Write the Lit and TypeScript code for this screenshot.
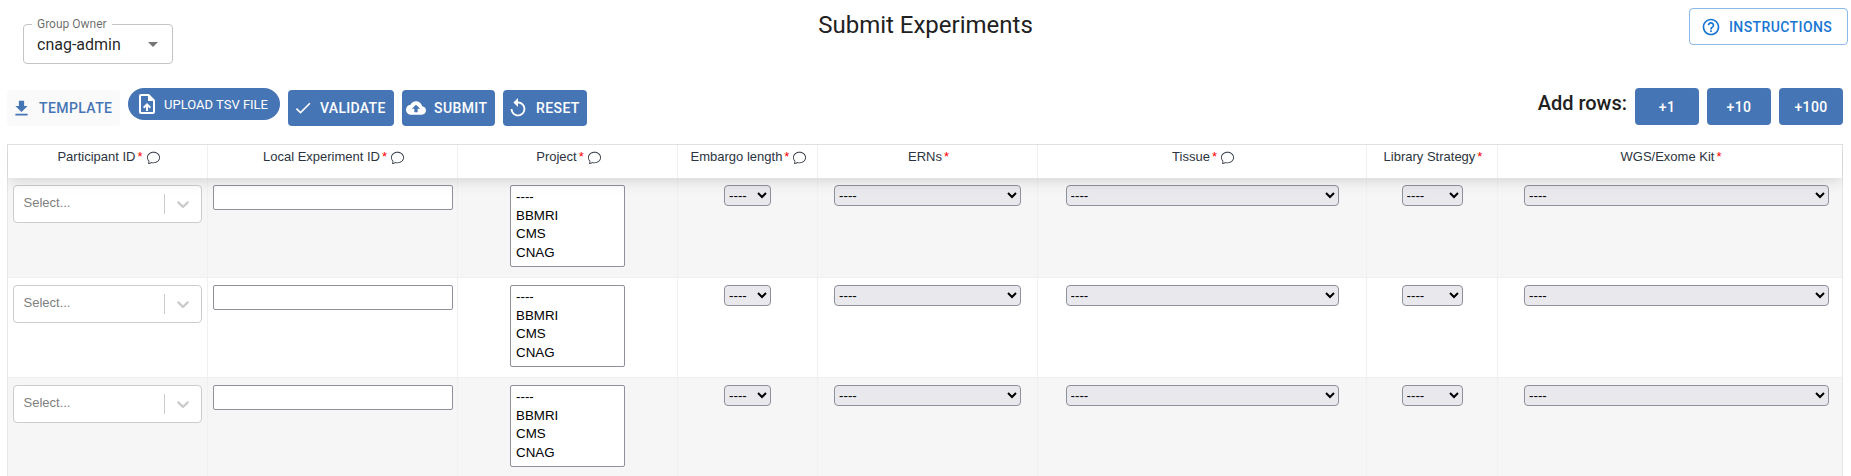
import { LitElement, html, css, svg } from "lit";
import { customElement } from "lit/decorators.js";

const mui = (d: string) => svg`<path d=${d}></path>`;
const icon = (cls: string, d: string) =>
  html`<svg class=${cls} viewBox="0 0 24 24" fill="currentColor" aria-hidden="true">${mui(d)}</svg>`;

const I = {
  download: "M5 20h14v-2H5v2zM19 9h-4V3H9v6H5l7 7 7-7z",
  upload: "M14 2H6c-1.1 0-1.99.9-1.99 2L4 20c0 1.1.89 2 1.99 2H18c1.1 0 2-.9 2-2V8l-6-6zm4 18H6V4h7v5h5v11zM8 15.01l1.41 1.41L11 14.84V19h2v-4.16l1.59 1.59L16 15.01 12.01 11z",
  check: "M9 16.17 4.83 12l-1.42 1.41L9 19 21 7l-1.41-1.41z",
  cloud: "M19.35 10.04C18.67 6.59 15.64 4 12 4 9.11 4 6.6 5.64 5.35 8.04 2.34 8.36 0 10.91 0 14c0 3.31 2.69 6 6 6h13c2.76 0 5-2.24 5-5 0-2.64-2.05-4.78-4.65-4.96zM14 13v4h-4v-4H7l5-5 5 5h-3z",
  replay: "M12 5V1L7 6l5 5V7c3.31 0 6 2.69 6 6s-2.69 6-6 6-6-2.69-6-6H4c0 4.42 3.58 8 8 8s8-3.58 8-8-3.58-8-8-8z",
  help: "M11 18h2v-2h-2v2zm1-16C6.48 2 2 6.48 2 12s4.48 10 10 10 10-4.48 10-10S17.52 2 12 2zm0 18c-4.41 0-8-3.59-8-8s3.59-8 8-8 8 3.59 8 8-3.59 8-8 8zm0-14c-2.21 0-4 1.79-4 4h2c0-1.1.9-2 2-2s2 .9 2 2c0 2-3 1.75-3 5h2c0-2.25 3-2.5 3-5 0-2.21-1.79-4-4-4z",
};

const bubble = html`<svg class="bubble" viewBox="0 0 16 16" fill="currentColor" aria-hidden="true"><path d="M2.678 11.894a1 1 0 0 1 .287.801 10.97 10.97 0 0 1-.398 2c1.395-.323 2.247-.697 2.634-.893a1 1 0 0 1 .71-.074A8.06 8.06 0 0 0 8 14c3.996 0 7-2.807 7-6 0-3.192-3.004-6-7-6S1 4.808 1 8c0 1.468.617 2.83 1.678 3.894zm-.493 3.905a21.682 21.682 0 0 1-.713.129c-.2.032-.352-.176-.273-.362a9.68 9.68 0 0 0 .244-.637l.003-.01c.248-.72.45-1.548.524-2.319C.743 11.37 0 9.76 0 8c0-3.866 3.582-7 8-7s8 3.134 8 7-3.582 7-8 7a9.06 9.06 0 0 1-2.347-.306c-.52.263-1.639.742-3.468 1.105z"></path></svg>`;

const columns: { label: string; note: boolean }[] = [
  { label: "Participant ID", note: true },
  { label: "Local Experiment ID", note: true },
  { label: "Project", note: true },
  { label: "Embargo length", note: true },
  { label: "ERNs", note: false },
  { label: "Tissue", note: true },
  { label: "Library Strategy", note: false },
  { label: "WGS/Exome Kit", note: false },
];

@customElement("app-root")
export class AppRoot extends LitElement {
  static styles = css`
    :host {
      display: block;
      width: 1851px;
      height: 476px;
      overflow: hidden;
      background: #fff;
      font-family: Roboto, "Liberation Sans", sans-serif;
      color: #212529;
      box-sizing: border-box;
    }
    * { box-sizing: border-box; }
    .top {
      display: grid;
      grid-template-columns: 1fr auto 1fr;
      height: 88px;
      padding: 8px 3px 0 3px;
    }
    .owner {
      position: relative;
      width: 150px;
      height: 40px;
      margin: 16px 0 0 20px;
      border: 1px solid #c4c4c4;
      border-radius: 4px;
      display: flex;
      align-items: center;
      justify-content: space-between;
      padding: 0 14px 0 13px;
      font-size: 16px;
      color: rgba(0, 0, 0, 0.87);
    }
    .owner-label {
      position: absolute;
      left: 8px;
      top: -8px;
      padding: 0 5px;
      background: #fff;
      font-size: 12px;
      line-height: 14px;
      color: rgba(0, 0, 0, 0.6);
    }
    .caret {
      width: 0;
      height: 0;
      border-left: 5px solid transparent;
      border-right: 5px solid transparent;
      border-top: 5px solid #757575;
    }
    h1 {
      margin: 4px 0 0;
      font-size: 24px;
      line-height: 26px;
      font-weight: 400;
      color: #212121;
    }
    .instructions {
      justify-self: end;
      width: 159px;
      height: 37px;
      border: 1px solid rgba(25, 118, 210, 0.5);
      border-radius: 4px;
      display: flex;
      align-items: center;
      gap: 8px;
      padding-left: 11px;
      color: #1976d2;
      font-size: 14px;
      font-weight: 500;
      letter-spacing: 0.4px;
    }
    .instructions svg { width: 20px; height: 20px; }
    .bar {
      display: flex;
      justify-content: space-between;
      align-items: flex-start;
      height: 56px;
      padding: 0 8px 0 7px;
    }
    .tools, .adds { display: flex; align-items: flex-start; gap: 8px; }
    .btn {
      display: flex;
      align-items: center;
      height: 36px;
      margin-top: 2px;
      border-radius: 4px;
      background: #4675b5;
      color: #fff;
      font-size: 14px;
      font-weight: 500;
      letter-spacing: 0.4px;
    }
    .template { width: 113px; background: #fafafa; color: #4675b5; padding-left: 4px; gap: 7px; }
    .template svg { width: 21px; height: 21px; }
    .upload {
      width: 152px;
      height: 32px;
      margin-top: 0;
      border-radius: 16px;
      font-size: 13px;
      font-weight: 400;
      letter-spacing: 0;
      padding-left: 7px;
      gap: 5px;
    }
    .upload svg { width: 24px; height: 24px; }
    .validate { width: 106px; padding-left: 5px; gap: 7px; letter-spacing: 0.3px; }
    .validate svg { width: 20px; height: 20px; }
    .submit { width: 93px; padding-left: 4px; gap: 8px; }
    .submit svg { width: 20px; height: 20px; }
    .reset { width: 84px; padding-left: 4px; gap: 7px; }
    .reset svg { width: 22px; height: 22px; }
    .adds { align-items: center; }
    .adds-label { font-size: 20px; font-weight: 500; color: #212121; line-height: 26px; margin-top: -7px; }
    .add { width: 64px; height: 37px; margin-top: 0; justify-content: center; }
    .table {
      margin: 0 8px 0 7px;
      display: grid;
      grid-template-columns: 200px 250px 220px 140px 220px 329px 131px 344px;
      grid-template-rows: 34px;
      grid-auto-rows: 100px;
      border-left: 1px solid #e6e6e6;
      border-right: 1px solid #e6e6e6;
    }
    .head {
      grid-column: 1 / -1;
      display: grid;
      grid-template-columns: subgrid;
      border-top: 1px solid #e0e0e0;
      background: #fff;
      position: relative;
      z-index: 1;
      box-shadow: 0 2px 15px 0 rgba(0, 0, 0, 0.15);
      clip-path: inset(0 -1px -30px -1px);
    }
    .row {
      grid-column: 1 / -1;
      display: grid;
      grid-template-columns: subgrid;
      border-bottom: 1px solid #f0f0f0;
      background: #fff;
      font-family: "Liberation Sans", Arial, sans-serif;
    }
    .row.odd { background: #f6f6f6; }
    .th {
      display: flex;
      justify-content: center;
      align-items: flex-start;
      padding: 4px 0 0 2px;
      font-family: "Liberation Sans", Arial, sans-serif;
      font-size: 13px;
      line-height: 15px;
      color: #2c3440;
      border-right: 1px solid #f0f0f0;
      white-space: nowrap;
    }
    .th:last-child, .td:last-child { border-right: 0; }
    .star { color: #f00; margin-left: 2px; font-size: 13px; }
    .bubble { width: 13px; height: 13px; margin: 2px 0 0 4px; color: #2c3440; }
    .td {
      border-right: 1px solid #f0f0f0;
      padding-top: 7px;
      display: flex;
      justify-content: center;
      align-items: flex-start;
    }
    .rs {
      width: 189px;
      height: 38px;
      margin-left: -1px;
      border: 1px solid #ccc;
      border-radius: 4px;
      background: #fff;
      display: flex;
      align-items: center;
      font-size: 13px;
      color: #808080;
      padding-left: 10px;
    }
    .rs-text { flex: 1; padding-bottom: 4px; }
    .rs-sep { width: 1px; height: 20px; background: #ccc; }
    .rs-chev { width: 36px; display: flex; justify-content: center; color: #ccc; }
    .rs-chev svg { width: 20px; height: 20px; }
    input {
      width: 240px;
      height: 25px;
      margin: 0;
      padding: 1px 2px;
      background: #fff;
      border: 1px solid #8f8f9d;
      border-radius: 2px;
    }
    select {
      margin: 0;
      font-family: "Liberation Sans", Arial, sans-serif;
      font-size: 13.33px;
      color: #000;
      border: 1px solid #8f8f9d;
      border-radius: 4px;
    }
    .list { width: 115px; height: 82px; background: #fff; border-radius: 2px; overflow: hidden; scrollbar-width: none; padding: 3px 0 0 3px; }
    .list option { min-height: 18.67px; padding: 0 2px; line-height: 18.67px; }
    .drop { height: 21px; background-color: #e9e9ed; }
    .embargo { width: 47px; }
    .erns { width: 187px; }
    .tissue { width: 273px; }
    .library { width: 61px; }
    .kit { width: 305px; margin-left: 13px; }
  `;

  private renderRow(odd: boolean) {
    const dash = html`<option>----</option>`;
    return html`
      <div class="row ${odd ? "odd" : ""}">
        <div class="td">
          <div class="rs">
            <span class="rs-text">Select...</span>
            <span class="rs-sep"></span>
            <span class="rs-chev"><svg viewBox="0 0 20 20" fill="currentColor" aria-hidden="true"><path d="M4.516 7.548c.436-.446 1.043-.481 1.576 0L10 11.295l3.908-3.747c.533-.481 1.141-.446 1.574 0 .436.445.408 1.197 0 1.615-.406.418-4.695 4.502-4.695 4.502-.217.223-.502.335-.787.335s-.57-.112-.789-.335c0 0-4.287-4.084-4.695-4.502s-.436-1.17 0-1.615z"></path></svg></span>
          </div>
        </div>
        <div class="td"><input type="text" /></div>
        <div class="td">
          <select class="list" multiple size="4">
            ${dash}<option>BBMRI</option><option>CMS</option><option>CNAG</option>
          </select>
        </div>
        <div class="td"><select class="drop embargo">${dash}</select></div>
        <div class="td"><select class="drop erns">${dash}</select></div>
        <div class="td"><select class="drop tissue">${dash}</select></div>
        <div class="td"><select class="drop library">${dash}</select></div>
        <div class="td"><select class="drop kit">${dash}</select></div>
      </div>
    `;
  }

  render() {
    return html`
      <div class="top">
        <div>
          <div class="owner">
            <span class="owner-label">Group Owner</span>
            <span>cnag-admin</span>
            <span class="caret"></span>
          </div>
        </div>
        <h1>Submit Experiments</h1>
        <div class="instructions">${icon("", I.help)}<span>INSTRUCTIONS</span></div>
      </div>
      <div class="bar">
        <div class="tools">
          <div class="btn template">${icon("", I.download)}<span>TEMPLATE</span></div>
          <div class="btn upload">${icon("", I.upload)}<span>UPLOAD TSV FILE</span></div>
          <div class="btn validate">${icon("", I.check)}<span>VALIDATE</span></div>
          <div class="btn submit">${icon("", I.cloud)}<span>SUBMIT</span></div>
          <div class="btn reset">${icon("", I.replay)}<span>RESET</span></div>
        </div>
        <div class="adds">
          <span class="adds-label">Add rows:</span>
          <div class="btn add">+1</div>
          <div class="btn add">+10</div>
          <div class="btn add">+100</div>
        </div>
      </div>
      <div class="table">
        <div class="head">
          ${columns.map(
            (c) => html`<div class="th"><span>${c.label}</span><span class="star">*</span>${c.note ? bubble : ""}</div>`
          )}
        </div>
        ${this.renderRow(true)}${this.renderRow(false)}${this.renderRow(true)}
      </div>
    `;
  }
}
